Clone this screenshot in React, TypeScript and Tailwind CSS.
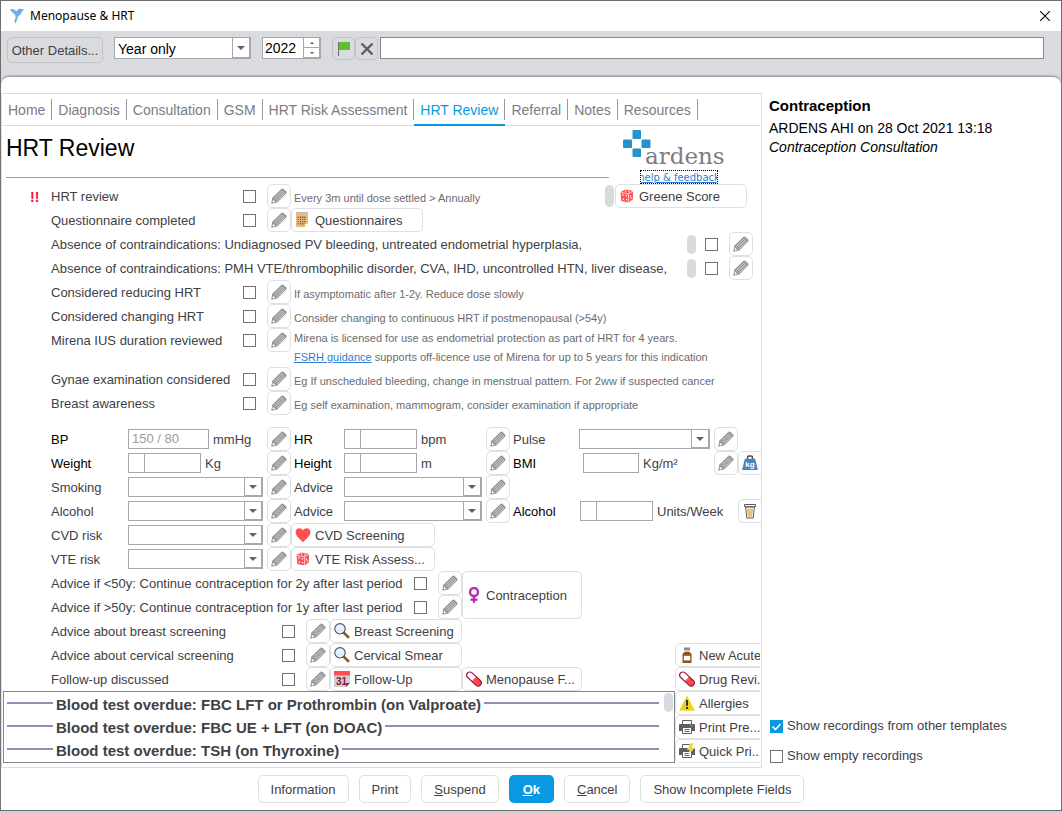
import type { ReactNode } from "react";

const BORDER = "border border-[#dedfe2] rounded-[5px]";

const TABS = ["Home", "Diagnosis", "Consultation", "GSM", "HRT Risk Assessment", "HRT Review", "Referral", "Notes", "Resources"];

const OVERDUE = [
  "Blood test overdue: FBC LFT or Prothrombin (on Valproate)",
  "Blood test overdue: FBC UE + LFT (on DOAC)",
  "Blood test overdue: TSH (on Thyroxine)",
];

/* ---------- icons ---------- */

function Svg({ children }: { children: ReactNode }) {
  return <svg viewBox="0 0 16 16" className="h-4 w-4 shrink-0" aria-hidden="true">{children}</svg>;
}

function PencilIcon() {
  return (
    <Svg>
      <path d="M.2 15.800 1.300 9.800 10.600.8q1-.8 2 .1l2.600 2.600q.8.900 0 1.900L6.200 14.600z" fill="#929292" />
      <path d="M3.200 10.400 11.600 2.200M4.500 11.700l8.600-8.400M5.800 13l8.300-8.100" stroke="#f0f0f0" strokeWidth=".7" />
      <path d="M2.100 11.200 3 12.900l1.800.9-2.500.6-.8-.8z" fill="#fff" />
    </Svg>
  );
}

function DiceIcon() {
  return (
    <Svg>
      <path d="M1.500 4 6.500 1.500 14 3v8.300L9.700 14.500 2.300 13z" fill="#ff5252" />
      <path d="M1.800 4.500l7.600 1.300L14 3.200M9.500 5.800l.2 8.600" fill="none" stroke="#fff" strokeWidth=".7" />
      <g fill="#fff">
        <circle cx="6.600" cy="3" r=".7" /><circle cx="10" cy="3.700" r=".7" />
        <circle cx="4" cy="7" r=".8" /><circle cx="7.500" cy="7.800" r=".8" />
        <circle cx="4.300" cy="11" r=".8" /><circle cx="7.700" cy="11.800" r=".8" />
        <path d="M11 7.500l.9-.5v2l-.9.500zM12.300 9.600l.9-.5v1.700l-.9.500z" />
      </g>
    </Svg>
  );
}

function NotepadIcon() {
  return (
    <Svg>
      <path d="M1 2h12v9.500L10 15H1z" fill="#e9bd78" />
      <path d="M10 15v-3.500h3z" fill="#fff3dc" />
      <path d="M1.500 1h12" stroke="#555" strokeWidth="1.400" strokeDasharray="1 1" />
      <path d="M3.200 4.500v8" stroke="#f04d4d" strokeWidth="1.400" strokeDasharray="1.400 .8" />
      <path d="M5.500 4.500v8M7.700 4.500v8M9.900 4.500v7" stroke="#5a5a62" strokeWidth="1.200" strokeDasharray="1.400 .8" />
    </Svg>
  );
}

function HeartIcon() {
  return <Svg><path d="M8 15.200C4.500 11.600.6 8.800.6 5 .6.800 6 0 8 3.300 10 0 15.400.8 15.400 5c0 3.800-3.900 6.600-7.400 10.200z" fill="#ff4f4f" /></Svg>;
}

function WeightIcon() {
  return (
    <Svg>
      <path d="M5.500 5V2.500q0-1.500 1.500-1.500h2q1.500 0 1.500 1.500V5" fill="none" stroke="#4c4c4c" strokeWidth="1.500" />
      <path d="M2.800 3.800h10.400L15.900 15H.1z" fill="#4a83bd" />
      <text x="8" y="11.800" textAnchor="middle" fontSize="8" fontWeight="700" fill="#fff" fontFamily="Liberation Sans, sans-serif">kg</text>
    </Svg>
  );
}

function CupIcon() {
  return (
    <Svg>
      <path d="M3.600 4h8.800l-1.200 11H4.800z" fill="#fff" stroke="#5a5a5a" />
      <path d="M4.900 5.500h6.200l-.9 8.700H5.800z" fill="#e8c080" />
      <path d="M2.500 3.600V1.500h11v2.100z" fill="#fff" stroke="#5a5a5a" />
    </Svg>
  );
}

function VenusIcon() {
  return (
    <Svg>
      <circle cx="8" cy="5" r="4" fill="none" stroke="#b02fb5" strokeWidth="2.400" />
      <path d="M8 9v6.800M4.500 12.600h7" stroke="#b02fb5" strokeWidth="2.400" />
    </Svg>
  );
}

function MagnifierIcon() {
  return (
    <Svg>
      <path d="M9.500 9.500 15 14.800" stroke="#8a5a1e" strokeWidth="2.600" />
      <circle cx="6" cy="5.800" r="5.200" fill="#e3f1fc" stroke="#4c525a" strokeWidth="1.100" />
    </Svg>
  );
}

function CalendarIcon() {
  return (
    <Svg>
      <path d="M0 1h16v11l-4 4H0z" fill="#cfcfcf" />
      <path d="M0 0h16v4.500H0z" fill="#ff4f4f" />
      <path d="M12 16v-4h4z" fill="#4c4c4c" />
      <text x="7.500" y="14" textAnchor="middle" fontSize="10" fontWeight="700" fill="#8b1538" fontFamily="Liberation Sans, sans-serif">31</text>
    </Svg>
  );
}

function PillIcon() {
  return (
    <Svg>
      <g transform="rotate(43 8 8)">
        <rect x="-.8" y="4.800" width="17.600" height="6.400" rx="3.200" fill="#fff" />
        <path d="M8 4.800h5.600a3.200 3.200 0 0 1 0 6.400H8z" fill="#ff4a4a" />
        <rect x="-.8" y="4.800" width="17.600" height="6.400" rx="3.200" fill="none" stroke="#a3183c" strokeWidth="1.200" />
      </g>
    </Svg>
  );
}

function BottleIcon() {
  return (
    <Svg>
      <path d="M5 .5h6v3H5z" fill="#8a8a8a" />
      <path d="M6 3.500h4V5H6z" fill="#c9c9c9" />
      <path d="M5.500 5h5L12.500 7v9h-9V7z" fill="#8a5214" />
      <path d="M4.800 8.800h6.400v4.600H4.800z" fill="#fff" />
    </Svg>
  );
}

function WarningIcon() {
  return (
    <Svg>
      <path d="M8 .6 15.900 15.800H.1z" fill="#e8d41c" />
      <path d="M8 5v5.800M8 12v2" stroke="#333" strokeWidth="2" />
    </Svg>
  );
}

function PrinterIcon({ bolt = false }: { bolt?: boolean }) {
  return (
    <Svg>
      <path d="M1 5h14q1 0 1 1v6H0V6q0-1 1-1z" fill="#5e5e5e" />
      <path d="M3.500 5V1.500h9V5" fill="#fff" stroke="#5e5e5e" />
      <path d="M3.500 8.500h9v6h-9z" fill="#fff" stroke="#5e5e5e" />
      <path d="M5.500 10.500h5M5.500 12.500h5" stroke="#5e5e5e" />
      {bolt ? (
        <path d="M11.500 0 8.500 6.500h2.700L9.500 11.500 15.500 4.700h-3L15 0z" fill="#ecd91b" stroke="#fff" strokeWidth=".5" />
      ) : (
        <g><circle cx="11.800" cy="6.600" r=".8" fill="#4fd04f" /><circle cx="14" cy="6.600" r=".8" fill="#ff4545" /></g>
      )}
    </Svg>
  );
}

function BirdIcon() {
  return (
    <Svg>
      <path d="M.8 1.200Q5 .4 7.600 3.200 8.600.2 11 .8L15.400 1.600 13 3.400Q12.400 6.800 9.200 8.200 8.600 11 6.400 15.600L5.200 13 6.600 9.400Q6.800 6.600 4.600 5.200 2.400 4 .8 1.200z" fill="#6db1ec" />
    </Svg>
  );
}

function ArdensLogo() {
  return (
    <svg viewBox="0 0 102 38" className="h-[38px] w-[102px]" role="img" aria-label="Ardens">
      <g fill="#2492cb">
        <rect x="9.500" y="0" width="8.500" height="9" rx="1" />
        <rect x="0" y="9.500" width="9" height="8.500" rx="1" />
        <rect x="18.500" y="9.500" width="9" height="8.500" rx="1" />
        <rect x="9.500" y="18.500" width="8.500" height="8.500" rx="1" />
      </g>
      <text x="22" y="34" fontSize="23" fill="#7b7d85" fontFamily="DejaVu Serif, serif">ardens</text>
    </svg>
  );
}

/* ---------- controls ---------- */

function Pencil({ name }: { name: string }) {
  return (
    <button type="button" aria-label={`Edit ${name}`} className={`${BORDER} grid h-6 w-6 shrink-0 place-items-center bg-white`}>
      <PencilIcon />
    </button>
  );
}

function IconButton({ icon, label, className = "" }: { icon: ReactNode; label: string; className?: string }) {
  return (
    <button type="button" className={`${BORDER} flex h-6 shrink-0 items-center gap-1 bg-white pl-[3px] whitespace-nowrap ${className}`}>
      {icon}
      <span className="pt-0.5">{label}</span>
    </button>
  );
}

function Check({ name, id }: { name?: string; id?: string }) {
  return (
    <input type="checkbox" id={id} aria-label={name} className="h-[13px] w-[13px] shrink-0 appearance-none border border-[#6f6f6f] bg-white" />
  );
}

function Dropdown({ name, className = "", children }: { name: string; className?: string; children?: ReactNode }) {
  return (
    <div className={`relative border border-[#a6a7ae] bg-white ${className}`}>
      <select aria-label={name} className="block h-full w-full appearance-none bg-transparent pl-[3px] outline-none">
        {children ?? <option></option>}
      </select>
      <span className="pointer-events-none absolute inset-y-0 right-0 grid w-[18px] place-items-center border-r border-b border-l border-[#a6a7ae]">
        <svg viewBox="0 0 8 4" className="h-1 w-2"><path d="M0 0h8L4 4z" fill="#626262" /></svg>
      </span>
    </div>
  );
}

function SplitInput({ name }: { name: string }) {
  return (
    <span className="flex h-5 w-[73px] border border-[#a6a7ae]">
      <input aria-label={`${name} operator`} className="w-4 border-r border-[#a6a7ae] outline-none" />
      <input aria-label={name} className="min-w-0 flex-1 px-1 outline-none" />
    </span>
  );
}

function CheckRow({ label, hint, mark, children }: { label: string; hint?: string; mark?: boolean; children?: ReactNode }) {
  return (
    <div className="flex h-6 items-center pl-7">
      <span className="w-[21px] pt-0.5 text-sm font-bold text-[#f0143c]">{mark && "!!"}</span>
      <span className="w-[192px] pt-0.5">{label}</span>
      <Check name={label} />
      <span className="w-[11px]" />
      <Pencil name={label} />
      {hint && <span className="w-[314px] pt-1 pl-[3px] text-[11px] whitespace-nowrap text-[#6b6b6f]">{hint}</span>}
      {children}
    </div>
  );
}

function LongRow({ label }: { label: string }) {
  return (
    <div className="flex h-6 items-center pl-[49px]">
      <span className="w-[636px] pt-0.5 whitespace-nowrap">{label}</span>
      <span className="h-[19px] w-[9px] rounded-full bg-[#d9dade]" />
      <span className="w-[9px]" />
      <Check name={label} />
      <span className="w-[11px]" />
      <Pencil name={label} />
    </div>
  );
}

function AdviceRow({ label, wide, children }: { label: string; wide?: boolean; children?: ReactNode }) {
  return (
    <div className="flex h-6 items-center">
      <span className={`pt-0.5 whitespace-nowrap ${wide ? "w-[363px]" : "w-[231px]"}`}>{label}</span>
      <Check name={label} />
      <span className="w-[11px]" />
      <Pencil name={label} />
      {children}
    </div>
  );
}

function VitalsRow({ children }: { children: ReactNode }) {
  return (
    <div className="grid h-6 grid-cols-[77px_139px_24px_53px_142px_24px_69px_135px_24px_24px] items-center whitespace-nowrap [&>label]:pt-0.5 [&>span]:pt-0.5">
      {children}
    </div>
  );
}

function Field({ unit, className = "", children }: { unit?: string; className?: string; children: ReactNode }) {
  return (
    <div className={`flex items-center gap-1 ${className}`}>
      {children}
      {unit && <span className="pt-0.5">{unit}</span>}
    </div>
  );
}

/* ---------- sections ---------- */

function Toolbar() {
  return (
    <div className="flex h-[45px] items-start bg-[#dadbdf] pt-1.5 pr-[17px] pl-1.5">
      <button type="button" className="h-[26px] w-24 shrink-0 rounded-[5px] border border-[#c2c3c8] pt-0.5 whitespace-nowrap">Other Details...</button>
      <Dropdown name="Date precision" className="ml-[11px] h-[22px] w-[137px] shrink-0 pt-px text-sm text-black">
        <option>Year only</option>
      </Dropdown>
      <div className="ml-[11px] flex h-[22px] w-[59px] shrink-0 border border-[#a6a7ae] bg-white text-sm text-black">
        <input aria-label="Year" defaultValue="2022" className="min-w-0 flex-1 pl-0.5 outline-none" />
        <div className="flex w-[17px] flex-col divide-y divide-[#a6a7ae] border-r border-b border-l border-[#a6a7ae]">
          <button type="button" aria-label="Next year" className="grid flex-1 place-items-center">
            <svg viewBox="0 0 4 2" className="h-0.5 w-1"><path d="M0 2h4L2 0z" fill="#555" /></svg>
          </button>
          <button type="button" aria-label="Previous year" className="grid flex-1 place-items-center">
            <svg viewBox="0 0 4 2" className="h-0.5 w-1"><path d="M0 0h4L2 2z" fill="#555" /></svg>
          </button>
        </div>
      </div>
      <button type="button" aria-label="Flag" className="ml-[11px] grid h-[23px] w-[23px] shrink-0 place-items-center rounded-[5px] border border-[#c2c3c8]">
        <svg viewBox="0 0 14 16" className="h-4 w-3.5"><path d="M1.500 1v14" stroke="#6e6e6e" /><path d="M2 1h11v8H2z" fill="#62c02c" /></svg>
      </button>
      <button type="button" aria-label="Clear" className="grid h-[23px] w-[23px] shrink-0 place-items-center rounded-[5px] border border-[#c2c3c8]">
        <svg viewBox="0 0 14 14" className="h-3.5 w-3.5"><path d="M1.500 1.500l11 11M12.500 1.500l-11 11" stroke="#5e5e5e" strokeWidth="2.400" /></svg>
      </button>
      <input aria-label="Notes" className="ml-0.5 h-[22px] min-w-0 flex-1 border border-[#85868f] bg-white px-1 outline-none" />
    </div>
  );
}

function TabBar() {
  return (
    <nav className="flex h-8 text-sm text-[#7c7c80] shadow-[inset_0_-1px_#dcdde0]">
      {TABS.map((tab) => {
        const active = tab === "HRT Review";
        return (
          <button
            key={tab}
            type="button"
            className={`flex items-start border-b-2 pt-[5px] ${active ? "border-[#0a98e2] text-[#0a98e2]" : "border-transparent"}`}
          >
            <span className="h-[21px] border-r border-[#97979c] px-1.5 leading-[23px] whitespace-nowrap">{tab}</span>
          </button>
        );
      })}
    </nav>
  );
}

function FormHeader() {
  return (
    <div className="flex h-[58px]">
      <h1 className="ml-1 h-[52px] w-[603px] border-b border-[#9d9da2] pt-2 text-[23px] leading-7 text-black">HRT Review</h1>
      <div className="ml-3.5 flex flex-col items-start gap-0.5 pt-1">
        <ArdensLogo />
        <a href="#help" className="ml-[17px] flex h-[14px] w-[78px] justify-center overflow-hidden border border-dotted border-black font-['DejaVu_Sans',sans-serif] text-[10px] leading-[14px] whitespace-nowrap text-[#2a7fd8] underline">
          help &amp; feedback
        </a>
      </div>
    </div>
  );
}

function Reviews() {
  return (
    <>
      <CheckRow label="HRT review" hint="Every 3m until dose settled > Annually" mark>
        <span className="h-[22px] w-[9px] rounded-full bg-[#d9dade]" />
        <IconButton icon={<DiceIcon />} label="Greene Score" className="ml-px w-[132px]" />
      </CheckRow>
      <CheckRow label="Questionnaire completed">
        <IconButton icon={<NotepadIcon />} label="Questionnaires" className="w-[132px]" />
      </CheckRow>
      <LongRow label="Absence of contraindications: Undiagnosed PV bleeding, untreated endometrial hyperplasia," />
      <LongRow label="Absence of contraindications: PMH VTE/thrombophilic disorder, CVA, IHD, uncontrolled HTN, liver disease," />
      <CheckRow label="Considered reducing HRT" hint="If asymptomatic after 1-2y. Reduce dose slowly" />
      <CheckRow label="Considered changing HRT" hint="Consider changing to continuous HRT if postmenopausal (>54y)" />
      <div className="flex items-start">
        <CheckRow label="Mirena IUS duration reviewed" />
        <p className="pt-px pl-[3px] text-[11px] leading-[19px] whitespace-nowrap text-[#6b6b6f]">
          Mirena is licensed for use as endometrial protection as part of HRT for 4 years.
          <br />
          <a href="#fsrh" className="text-[#2a7fd8] underline">FSRH guidance</a> supports off-licence use of Mirena for up to 5 years for this indication
        </p>
      </div>
      <CheckRow label="Gynae examination considered" hint="Eg If unscheduled bleeding, change in menstrual pattern. For 2ww if suspected cancer" />
      <CheckRow label="Breast awareness" hint="Eg self examination, mammogram, consider examination if appropriate" />
    </>
  );
}

function Vitals() {
  return (
    <div className="mt-3 pl-[49px]">
      <VitalsRow>
        <label htmlFor="bp" className="text-black">BP</label>
        <Field unit="mmHg">
          <input id="bp" placeholder="150 / 80" className="h-5 w-[81px] border border-[#a6a7ae] px-[3px] outline-none placeholder:text-[#9b9b9f]" />
        </Field>
        <Pencil name="BP" />
        <span className="pl-[3px] text-black">HR</span>
        <Field unit="bpm"><SplitInput name="HR" /></Field>
        <Pencil name="HR" />
        <span className="pl-[3px]">Pulse</span>
        <Dropdown name="Pulse" className="h-5 w-[131px]" />
        <Pencil name="Pulse" />
      </VitalsRow>
      <VitalsRow>
        <span className="text-black">Weight</span>
        <Field unit="Kg"><SplitInput name="Weight" /></Field>
        <Pencil name="Weight" />
        <span className="pl-[3px] text-black">Height</span>
        <Field unit="m"><SplitInput name="Height" /></Field>
        <Pencil name="Height" />
        <label htmlFor="bmi" className="pl-[3px] text-black">BMI</label>
        <Field unit="Kg/m²" className="pl-1">
          <input id="bmi" className="h-5 w-14 border border-[#a6a7ae] px-1 outline-none" />
        </Field>
        <Pencil name="BMI" />
        <button type="button" aria-label="Weight calculator" className={`${BORDER} flex h-6 w-7 items-center bg-white pl-[3px]`}><WeightIcon /></button>
      </VitalsRow>
      <VitalsRow>
        <span>Smoking</span>
        <Dropdown name="Smoking" className="h-5 w-[135px]" />
        <Pencil name="Smoking" />
        <span className="pl-[3px]">Advice</span>
        <Dropdown name="Smoking advice" className="h-5 w-[138px]" />
        <Pencil name="Smoking advice" />
      </VitalsRow>
      <VitalsRow>
        <span>Alcohol</span>
        <Dropdown name="Alcohol" className="h-5 w-[135px]" />
        <Pencil name="Alcohol" />
        <span className="pl-[3px]">Advice</span>
        <Dropdown name="Alcohol advice" className="h-5 w-[138px]" />
        <Pencil name="Alcohol advice" />
        <span className="pl-[3px] text-black">Alcohol</span>
        <Field unit="Units/Week" className="pl-px"><SplitInput name="Alcohol units" /></Field>
        <span />
        <button type="button" aria-label="Alcohol calculator" className={`${BORDER} flex h-6 w-7 items-center bg-white pl-[3px]`}><CupIcon /></button>
      </VitalsRow>
      <VitalsRow>
        <span>CVD risk</span>
        <Dropdown name="CVD risk" className="h-5 w-[135px]" />
        <Pencil name="CVD risk" />
        <IconButton icon={<HeartIcon />} label="CVD Screening" className="w-36" />
      </VitalsRow>
      <VitalsRow>
        <span>VTE risk</span>
        <Dropdown name="VTE risk" className="h-5 w-[135px]" />
        <Pencil name="VTE risk" />
        <IconButton icon={<DiceIcon />} label="VTE Risk Assess..." className="w-36" />
      </VitalsRow>
    </div>
  );
}

function OverdueList() {
  return (
    <div className="ml-px flex h-[72px] border border-[#83848c] pl-[3px] text-[15px] font-bold">
      <div className="flex-1 pt-px">
        {OVERDUE.map((text) => (
          <div key={text} className="flex h-[23px] items-center">
            <span className="mb-1 h-0.5 w-[46px] bg-[#8e8fb8]" />
            <span className="mx-[3px] whitespace-nowrap">{text}</span>
            <span className="mb-1 h-0.5 flex-1 bg-[#8e8fb8]" />
          </div>
        ))}
      </div>
      <span className="mt-px mr-px ml-[5px] h-[19px] w-[9px] rounded-full bg-[#d9dade]" />
    </div>
  );
}

function Advice() {
  return (
    <>
      <div className="flex pl-[49px]">
        <div>
          <AdviceRow wide label="Advice if <50y: Continue contraception for 2y after last period" />
          <AdviceRow wide label="Advice if >50y: Continue contraception for 1y after last period" />
        </div>
        <button type="button" className={`${BORDER} flex h-12 w-[120px] items-center gap-1 bg-white pl-[3px]`}>
          <VenusIcon />
          <span className="pt-0.5">Contraception</span>
        </button>
      </div>
      <div className="pl-[49px]">
        <AdviceRow label="Advice about breast screening">
          <IconButton icon={<MagnifierIcon />} label="Breast Screening" className="w-[132px]" />
        </AdviceRow>
      </div>
      <div className="flex">
        <div className="min-w-0 flex-1">
          <div className="pl-[49px]">
            <AdviceRow label="Advice about cervical screening">
              <IconButton icon={<MagnifierIcon />} label="Cervical Smear" className="w-[132px]" />
            </AdviceRow>
            <AdviceRow label="Follow-up discussed">
              <IconButton icon={<CalendarIcon />} label="Follow-Up" className="w-[132px]" />
              <IconButton icon={<PillIcon />} label="Menopause F..." className="w-[120px]" />
            </AdviceRow>
          </div>
          <OverdueList />
        </div>
        <div className="w-[85px] shrink-0 overflow-hidden">
          <IconButton icon={<BottleIcon />} label="New Acute" className="w-24" />
          <IconButton icon={<PillIcon />} label="Drug Revi..." className="w-24" />
          <IconButton icon={<WarningIcon />} label="Allergies" className="w-24" />
          <IconButton icon={<PrinterIcon />} label="Print Pre..." className="w-24" />
          <IconButton icon={<PrinterIcon bolt />} label="Quick Pri..." className="w-24" />
        </div>
      </div>
    </>
  );
}

function Sidebar() {
  return (
    <aside className="flex w-[299px] shrink-0 flex-col justify-between pt-[3px] pb-0.5 pl-[7px]">
      <div className="text-sm leading-5 text-black">
        <h2 className="text-[15px] font-bold">Contraception</h2>
        <p className="pt-0.5">ARDENS AHI on 28 Oct 2021 13:18</p>
        <p className="leading-[19px] italic">Contraception Consultation</p>
      </div>
      <div className="flex flex-col gap-2.5 pl-px">
        <div className="flex h-5 items-center gap-1">
          <span className="relative h-[13px] w-[13px]">
            <input type="checkbox" id="other" defaultChecked className="block h-[13px] w-[13px] appearance-none border border-[#6f6f6f] checked:border-[#0a98e2] checked:bg-[#0a98e2]" />
            <svg viewBox="0 0 13 13" className="pointer-events-none absolute inset-0"><path d="M2.500 6.500l3 3 5-5.500" fill="none" stroke="#fff" strokeWidth="1.600" /></svg>
          </span>
          <label htmlFor="other">Show recordings from other templates</label>
        </div>
        <div className="flex h-5 items-center gap-1">
          <Check id="empty" />
          <label htmlFor="empty">Show empty recordings</label>
        </div>
      </div>
    </aside>
  );
}

function Footer() {
  const btn = `${BORDER} h-7 bg-white px-3 pt-0.5`;
  return (
    <footer className="flex justify-center gap-2.5 py-[7px]">
      <button type="button" className={btn}>Information</button>
      <button type="button" className={btn}>Print</button>
      <button type="button" className={btn}><u>S</u>uspend</button>
      <button type="button" className="h-7 rounded-[5px] bg-[#0a98e2] px-3.5 pt-0.5 font-bold text-white"><u>O</u>k</button>
      <button type="button" className={btn}><u>C</u>ancel</button>
      <button type="button" className={btn}>Show Incomplete Fields</button>
    </footer>
  );
}

export default function App() {
  return (
    <div className="bg-[#cfcfcf] pb-0.5 font-['Liberation_Sans',Arial,sans-serif] text-[13px] leading-5 text-[#414145]">
      <div className="border border-[#6d6d6d] bg-[#dadbdf]">
        <header className="flex h-[30px] items-center bg-white px-2 font-['Noto_Sans','Open_Sans',sans-serif] text-xs text-black">
          <BirdIcon />
          <span className="ml-[5px] flex-1">Menopause &amp; HRT</span>
          <button type="button" aria-label="Close" className="grid h-5 w-4 place-items-center">
            <svg viewBox="0 0 10 10" className="h-2.5 w-2.5"><path d="M0 0l10 10M10 0L0 10" stroke="#111" strokeWidth="1.200" /></svg>
          </button>
        </header>
        <Toolbar />
        <div className="rounded-t-[8px] border-t border-[#a0a1a6] bg-white pt-4 shadow-[0_-1px_1px_#b5b6bb]">
          <div className="flex">
            <main className="min-w-0 flex-1 overflow-hidden border border-[#dcdde0] pr-px pb-1">
              <TabBar />
              <FormHeader />
              <Reviews />
              <Vitals />
              <Advice />
            </main>
            <Sidebar />
          </div>
          <Footer />
        </div>
      </div>
    </div>
  );
}
